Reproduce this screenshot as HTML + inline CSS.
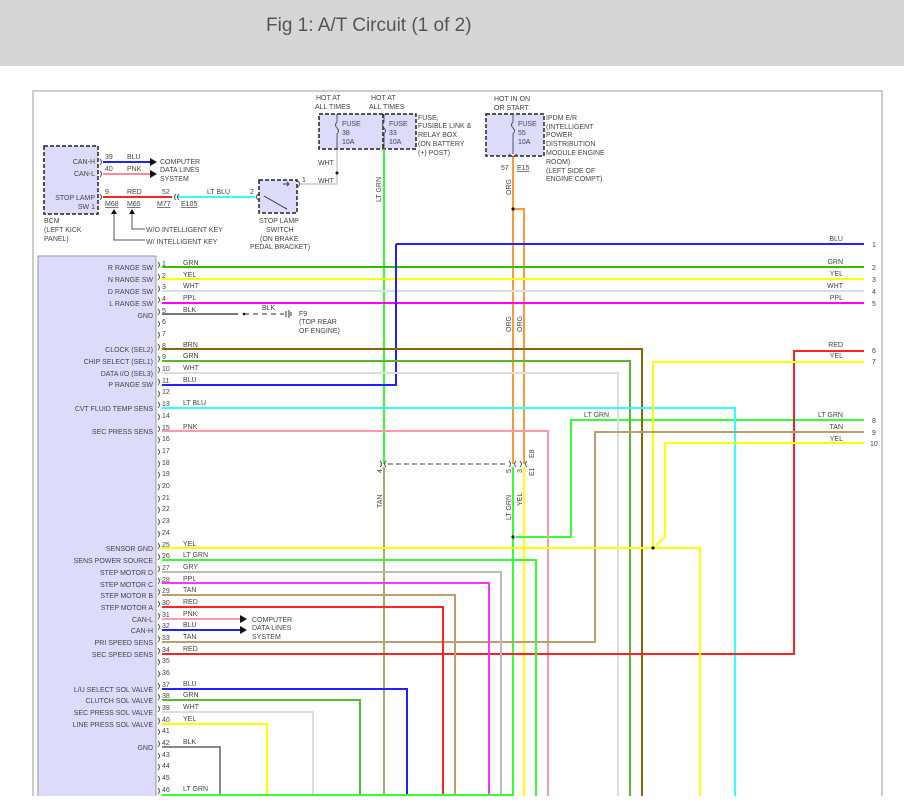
<!DOCTYPE html>
<html><head><meta charset="utf-8"><style>
html,body{margin:0;padding:0;background:#fff;width:904px;height:812px;overflow:hidden}
.hdr{position:absolute;left:0;top:0;width:904px;height:66px;background:#d6d6d6}
.hdr span{position:absolute;left:266px;top:15px;font:19px "Liberation Sans",sans-serif;color:#555}
svg{position:absolute;left:0;top:0}
text{font-family:"Liberation Sans",sans-serif;font-size:7px;fill:#444}
.r{text-anchor:end}
</style></head><body>
<div class="hdr"><span>Fig 1: A/T Circuit (1 of 2)</span></div>
<svg width="904" height="812" viewBox="0 0 904 812">
<defs><clipPath id="c"><rect x="0" y="66" width="904" height="730"/></clipPath></defs>
<g clip-path="url(#c)" fill="none" stroke-width="2">
<!-- frame -->
<path d="M33 800V91H882V800" stroke="#bbb" stroke-width="1.5"/>
<!-- left module -->
<rect x="38" y="256" width="118" height="560" fill="#dcdcfa" stroke="#999" stroke-width="1"/>
<!-- BCM -->
<rect x="44" y="146" width="54" height="68" fill="#dcdcfa" stroke="#222" stroke-width="1.5" stroke-dasharray="4,2"/>
<!-- stop lamp switch -->
<rect x="259" y="180" width="38" height="33" fill="#dcdcfa" stroke="#222" stroke-width="1.5" stroke-dasharray="4,2"/>
<path d="M264 196 L285 208 M285 208 l2 1 M289 184 h-6 M289 184 l-2 -2 M289 184 l-2 2" stroke="#333" stroke-width="1"/>
<!-- fuse box 1 -->
<rect x="319" y="114" width="97" height="35" fill="#dcdcfa" stroke="#222" stroke-width="1.5" stroke-dasharray="4,2"/>
<path d="M383 114V149" stroke="#222" stroke-width="1.5" stroke-dasharray="4,2"/>
<path d="M337 114v8 q-3 3 0 6 q3 3 0 6 v15 M384 114v8 q-3 3 0 6 q3 3 0 6 v15" stroke="#555" stroke-width="1"/>
<!-- IPDM -->
<rect x="486" y="114" width="58" height="42" fill="#dcdcfa" stroke="#222" stroke-width="1.5" stroke-dasharray="4,2"/>
<path d="M513 114v8 q-3 3 0 6 q3 3 0 6 v20 M509 154 l4 3 4 -3" stroke="#555" stroke-width="1"/>

<!-- BCM wires -->
<path d="M103 162H150" stroke="#2222ff"/>
<path d="M103 174H150" stroke="#ff8899"/>
<path d="M150 158l7 4-7 4z M150 170l7 4-7 4z" fill="#111" stroke="none"/>
<path d="M103 197H172" stroke="#ff2222"/>
<path d="M178 197H255" stroke="#33ffff"/>
<path d="M300 184H337V150" stroke="#ccc" stroke-width="1.5"/>
<circle cx="337" cy="173" r="1.5" fill="#111" stroke="none"/>
<path d="M114 212V240H145 M132 212V229H145" stroke="#555" stroke-width="1"/>
<path d="M111 214l3-5 3 5z M129 214l3-5 3 5z" fill="#111" stroke="none"/>

<!-- LT GRN from fuse 33 -->
<path d="M384 149V464" stroke="#33ff33"/>
<path d="M384 467V800" stroke="#b8a070"/>
<!-- ORG -->
<path d="M513 157V464" stroke="#ff9933"/>
<path d="M513 209H524V464" stroke="#ff9933"/>
<circle cx="513" cy="209" r="1.6" fill="#111" stroke="none"/>
<path d="M388 464H508" stroke="#444" stroke-width="1" stroke-dasharray="5,3"/>
<path d="M513 467V800" stroke="#33ff33"/>
<path d="M524 467V800" stroke="#ffff00"/>
<circle cx="513" cy="537" r="1.6" fill="#111" stroke="none"/>
<path d="M516 537H571V420H864" stroke="#33ff33"/>

<!-- pins -->
<path d="M162 267H864" stroke="#33bb00"/>
<path d="M162 279H864" stroke="#ffff00"/>
<path d="M162 291H864" stroke="#dddddd"/>
<path d="M162 303H864" stroke="#ff00ff"/>
<path d="M162 314H238" stroke="#777"/>
<path d="M244 314H284" stroke="#555" stroke-width="1.2" stroke-dasharray="5,4"/>
<circle cx="244" cy="314" r="1.3" fill="#111" stroke="none"/>
<path d="M286 311v6 M289 310v8 M291 312v4" stroke="#333" stroke-width="1"/>
<path d="M396 244H864 M396 244V385H162" stroke="#2222ff"/>
<path d="M162 349H642V800" stroke="#8b6508"/>
<path d="M162 361H630V800" stroke="#5ab52f"/>
<path d="M162 373H618V800" stroke="#dddddd"/>
<path d="M162 408H735V800" stroke="#33ffff"/>
<path d="M162 431H548V800" stroke="#ff99aa"/>
<path d="M864 351H794V654H162" stroke="#ff2222"/>
<path d="M864 362H653V548" stroke="#ffff00"/>
<path d="M864 432H595V642H162" stroke="#b8a070"/>
<path d="M864 443H665V537L655 546" stroke="#ffff00"/>
<path d="M162 548H700V800" stroke="#ffff00"/>
<circle cx="653" cy="548" r="1.6" fill="#111" stroke="none"/>
<path d="M162 560H536V800" stroke="#33ff33"/>
<path d="M162 572H501V800" stroke="#bbbbbb"/>
<path d="M162 583H489V800" stroke="#ff33ff"/>
<path d="M162 595H455V800" stroke="#b8a070"/>
<path d="M162 607H443V800" stroke="#ff2222"/>
<path d="M162 619H240" stroke="#ff99aa"/>
<path d="M162 630H240" stroke="#2222ff"/>
<path d="M240 615l7 4-7 4z M240 626l7 4-7 4z" fill="#111" stroke="none"/>
<path d="M162 689H407V800" stroke="#2222ff"/>
<path d="M162 700H360V800" stroke="#55bb33"/>
<path d="M162 712H313V800" stroke="#dddddd"/>
<path d="M162 724H267V800" stroke="#ffff00"/>
<path d="M162 747H220V800" stroke="#888"/>
<path d="M162 795H513" stroke="#33ff33"/>
<!-- connector marks -->
<g stroke="#555" stroke-width="1">
<path d="M158 262q3 3 0 6 M158 274q3 3 0 6 M158 286q3 3 0 6 M158 297q3 3 0 6 M158 309q3 3 0 6 M158 321q3 3 0 6 M158 332q3 3 0 6 M158 344q3 3 0 6 M158 356q3 3 0 6 M158 367q3 3 0 6 M158 379q3 3 0 6 M158 391q3 3 0 6 M158 402q3 3 0 6 M158 414q3 3 0 6 M158 426q3 3 0 6 M158 437q3 3 0 6 M158 449q3 3 0 6 M158 461q3 3 0 6 M158 472q3 3 0 6 M158 484q3 3 0 6 M158 496q3 3 0 6 M158 507q3 3 0 6 M158 519q3 3 0 6 M158 531q3 3 0 6 M158 543q3 3 0 6 M158 554q3 3 0 6 M158 566q3 3 0 6 M158 578q3 3 0 6 M158 589q3 3 0 6 M158 601q3 3 0 6 M158 613q3 3 0 6 M158 624q3 3 0 6 M158 636q3 3 0 6 M158 648q3 3 0 6 M158 659q3 3 0 6 M158 671q3 3 0 6 M158 683q3 3 0 6 M158 694q3 3 0 6 M158 706q3 3 0 6 M158 718q3 3 0 6 M158 729q3 3 0 6 M158 741q3 3 0 6 M158 753q3 3 0 6 M158 764q3 3 0 6 M158 776q3 3 0 6 M158 788q3 3 0 6"/>
<path d="M100 159q3 3 0 6 M100 171q3 3 0 6 M100 194q3 3 0 6 M176 194q-3 3 0 6 M179 194q-3 3 0 6 M258 194q-3 3 0 6 M298 181q3 3 0 6 M380 461q3 3 0 6 M386 461q-3 3 0 6 M509 461q3 3 0 6 M516 461q-3 3 0 6 M520 461q3 3 0 6 M527 461q-3 3 0 6"/>
</g>
</g>
<g>
<!-- header text labels -->
<text x="316" y="100">HOT AT</text><text x="315" y="109">ALL TIMES</text>
<text x="371" y="100">HOT AT</text><text x="369" y="109">ALL TIMES</text>
<text x="342" y="126">FUSE</text><text x="342" y="135">38</text><text x="342" y="144">10A</text>
<text x="389" y="126">FUSE</text><text x="389" y="135">33</text><text x="389" y="144">10A</text>
<text x="418" y="120">FUSE,</text><text x="418" y="128">FUSIBLE LINK &amp;</text><text x="418" y="137">RELAY BOX</text><text x="418" y="146">(ON BATTERY</text><text x="418" y="155">(+) POST)</text>
<text x="494" y="101">HOT IN ON</text><text x="494" y="110">OR START</text>
<text x="518" y="126">FUSE</text><text x="518" y="135">55</text><text x="518" y="144">10A</text>
<text x="546" y="120">IPDM E/R</text><text x="546" y="129">(INTELLIGENT</text><text x="546" y="137">POWER</text><text x="546" y="146">DISTRIBUTION</text><text x="546" y="155">MODULE ENGINE</text><text x="546" y="164">ROOM)</text><text x="546" y="173">(LEFT SIDE OF</text><text x="546" y="181">ENGINE COMPT)</text>
<text x="501" y="170">57</text><text x="517" y="170" text-decoration="underline">E15</text>
<text x="318" y="165">WHT</text><text x="318" y="183">WHT</text><text x="302" y="182">1</text>
<text class="r" x="95" y="164">CAN-H</text><text class="r" x="95" y="176">CAN-L</text>
<text class="r" x="95" y="200">STOP LAMP</text><text class="r" x="95" y="209">SW 1</text>
<text x="44" y="223">BCM</text><text x="44" y="232">(LEFT KICK</text><text x="44" y="241">PANEL)</text>
<text x="105" y="159">39</text><text x="127" y="159">BLU</text><text x="105" y="171">40</text><text x="127" y="171">PNK</text>
<text x="160" y="164">COMPUTER</text><text x="160" y="172">DATA LINES</text><text x="160" y="181">SYSTEM</text>
<text x="105" y="194">9</text><text x="127" y="194">RED</text><text x="162" y="194">52</text>
<text x="105" y="206" text-decoration="underline">M68</text><text x="127" y="206" text-decoration="underline">M65</text><text x="157" y="206" text-decoration="underline">M77</text><text x="181" y="206" text-decoration="underline">E105</text>
<text x="207" y="194">LT BLU</text><text x="250" y="194">2</text>
<text x="146" y="232">W/O INTELLIGENT KEY</text><text x="146" y="244">W/ INTELLIGENT KEY</text>
<text x="259" y="223">STOP LAMP</text><text x="266" y="232">SWITCH</text><text x="260" y="241">(ON BRAKE</text><text x="250" y="249">PEDAL BRACKET)</text>
<text transform="translate(381,202) rotate(-90)">LT GRN</text>
<text transform="translate(511,195) rotate(-90)">ORG</text>
<text transform="translate(511,332) rotate(-90)">ORG</text><text transform="translate(522,332) rotate(-90)">ORG</text>
<text transform="translate(382,508) rotate(-90)">TAN</text>
<text transform="translate(511,520) rotate(-90)">LT GRN</text><text transform="translate(522,506) rotate(-90)">YEL</text>
<text transform="translate(382,473) rotate(-90)">4</text><text transform="translate(511,473) rotate(-90)">5</text><text transform="translate(522,473) rotate(-90)">3</text>
<text transform="translate(534,476) rotate(-90)">E1</text><text transform="translate(534,458) rotate(-90)">E8</text>
<text x="262" y="310">BLK</text><text x="299" y="316">F9</text><text x="299" y="324">(TOP REAR</text><text x="299" y="333">OF ENGINE)</text>
<text x="584" y="417">LT GRN</text>
<!-- right labels -->
<text class="r" x="843" y="241">BLU</text><text x="872" y="247">1</text>
<text class="r" x="843" y="264">GRN</text><text x="872" y="270">2</text>
<text class="r" x="843" y="276">YEL</text><text x="872" y="282">3</text>
<text class="r" x="843" y="288">WHT</text><text x="872" y="294">4</text>
<text class="r" x="843" y="300">PPL</text><text x="872" y="306">5</text>
<text class="r" x="843" y="347">RED</text><text x="872" y="353">6</text>
<text class="r" x="843" y="358">YEL</text><text x="872" y="364">7</text>
<text class="r" x="843" y="417">LT GRN</text><text x="872" y="423">8</text>
<text class="r" x="843" y="429">TAN</text><text x="872" y="435">9</text>
<text class="r" x="843" y="441">YEL</text><text x="870" y="446">10</text>
<!-- left module labels -->
<text class="r" x="153" y="270">R RANGE SW</text><text class="r" x="153" y="282">N RANGE SW</text><text class="r" x="153" y="294">D RANGE SW</text><text class="r" x="153" y="306">L RANGE SW</text><text class="r" x="153" y="318">GND</text>
<text class="r" x="153" y="352">CLOCK (SEL2)</text><text class="r" x="153" y="364">CHIP SELECT (SEL1)</text><text class="r" x="153" y="376">DATA I/O (SEL3)</text><text class="r" x="153" y="387">P RANGE SW</text>
<text class="r" x="153" y="411">CVT FLUID TEMP SENS</text><text class="r" x="153" y="434">SEC PRESS SENS</text>
<text class="r" x="153" y="551">SENSOR GND</text><text class="r" x="153" y="563">SENS POWER SOURCE</text><text class="r" x="153" y="575">STEP MOTOR D</text><text class="r" x="153" y="587">STEP MOTOR C</text><text class="r" x="153" y="598">STEP MOTOR B</text><text class="r" x="153" y="610">STEP MOTOR A</text><text class="r" x="153" y="622">CAN-L</text><text class="r" x="153" y="633">CAN-H</text><text class="r" x="153" y="645">PRI SPEED SENS</text><text class="r" x="153" y="657">SEC SPEED SENS</text>
<text class="r" x="153" y="692">L/U SELECT SOL VALVE</text><text class="r" x="153" y="703">CLUTCH SOL VALVE</text><text class="r" x="153" y="715">SEC PRESS SOL VALVE</text><text class="r" x="153" y="727">LINE PRESS SOL VALVE</text><text class="r" x="153" y="750">GND</text>
<text x="252" y="622">COMPUTER</text><text x="252" y="630">DATA LINES</text><text x="252" y="639">SYSTEM</text>
<!-- pin numbers -->
<text x="162" y="266">1</text><text x="162" y="278">2</text><text x="162" y="289">3</text><text x="162" y="301">4</text><text x="162" y="313">5</text><text x="162" y="324">6</text><text x="162" y="336">7</text><text x="162" y="348">8</text><text x="162" y="359">9</text><text x="162" y="371">10</text><text x="162" y="383">11</text><text x="162" y="394">12</text><text x="162" y="406">13</text><text x="162" y="418">14</text><text x="162" y="430">15</text><text x="162" y="441">16</text><text x="162" y="453">17</text><text x="162" y="465">18</text><text x="162" y="476">19</text><text x="162" y="488">20</text><text x="162" y="500">21</text><text x="162" y="511">22</text><text x="162" y="523">23</text><text x="162" y="535">24</text><text x="162" y="547">25</text><text x="162" y="558">26</text><text x="162" y="570">27</text><text x="162" y="582">28</text><text x="162" y="593">29</text><text x="162" y="605">30</text><text x="162" y="617">31</text><text x="162" y="628">32</text><text x="162" y="640">33</text><text x="162" y="652">34</text><text x="162" y="663">35</text><text x="162" y="675">36</text><text x="162" y="687">37</text><text x="162" y="698">38</text><text x="162" y="710">39</text><text x="162" y="722">40</text><text x="162" y="733">41</text><text x="162" y="745">42</text><text x="162" y="757">43</text><text x="162" y="768">44</text><text x="162" y="780">45</text><text x="162" y="792">46</text>
<!-- wire colour labels -->
<text x="183" y="265">GRN</text><text x="183" y="277">YEL</text><text x="183" y="288">WHT</text><text x="183" y="300">PPL</text><text x="183" y="312">BLK</text>
<text x="183" y="347">BRN</text><text x="183" y="358">GRN</text><text x="183" y="370">WHT</text><text x="183" y="382">BLU</text><text x="183" y="405">LT BLU</text><text x="183" y="429">PNK</text>
<text x="183" y="546">YEL</text><text x="183" y="557">LT GRN</text><text x="183" y="569">GRY</text><text x="183" y="581">PPL</text><text x="183" y="592">TAN</text><text x="183" y="604">RED</text><text x="183" y="616">PNK</text><text x="183" y="627">BLU</text><text x="183" y="639">TAN</text><text x="183" y="651">RED</text>
<text x="183" y="686">BLU</text><text x="183" y="697">GRN</text><text x="183" y="709">WHT</text><text x="183" y="721">YEL</text><text x="183" y="744">BLK</text><text x="183" y="791">LT GRN</text>
</g>
</svg>
</body></html>
